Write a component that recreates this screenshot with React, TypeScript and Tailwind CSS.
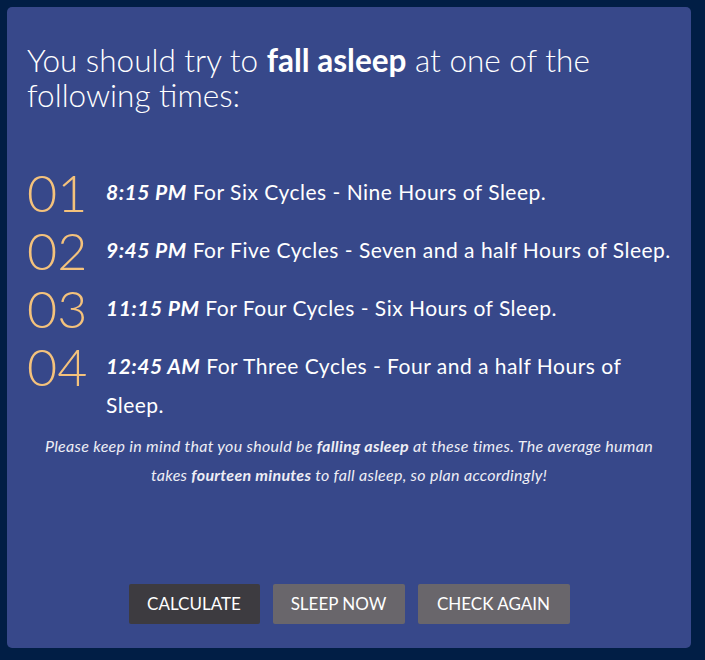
import React from 'react';

const times = [
  { n: '01', time: '8:15 PM', text: 'For Six Cycles - Nine Hours of Sleep.' },
  { n: '02', time: '9:45 PM', text: 'For Five Cycles - Seven and a half Hours of Sleep.' },
  { n: '03', time: '11:15 PM', text: 'For Four Cycles - Six Hours of Sleep.' },
  { n: '04', time: '12:45 AM', text: 'For Three Cycles - Four and a half Hours of Sleep.' },
];

export default function App() {
  return (
    <div
      className="min-h-[660px] w-[705px] bg-[#011e45] p-[7px]"
      style={{ fontFamily: 'Lato, "Open Sans", sans-serif' }}
    >
      <div className="flex h-[641px] w-[684px] flex-col rounded-[5px] bg-[#37488a] px-[20px] pb-[24px] pt-[36px] text-white">
        <h1 className="text-[31.5px] font-light leading-[35px]">
          You should try to <span className="font-bold">fall asleep</span> at one of the following times:
        </h1>

        <ul className="mt-[50px]">
          {times.map((t) => (
            <li key={t.n} className="flex items-start">
              <span className="w-[79px] shrink-0 text-[52px] font-light leading-[58px] text-[#f4c27c]">{t.n}</span>
              <p className="mt-[9px] text-[21px] leading-[39px] tracking-[0.5px]">
                <span className="font-bold italic">{t.time}</span> {t.text}
              </p>
            </li>
          ))}
        </ul>

        <p className="mt-[7px] text-center text-[16px] italic leading-[29px] tracking-[0.3px] text-[#eeeef5]">
          Please keep in mind that you should be <span className="font-bold">falling asleep</span> at these times. The
          average human takes <span className="font-bold">fourteen minutes</span> to fall asleep, so plan accordingly!
        </p>

        <div className="mt-auto flex justify-center gap-[13px]">
          <button className="h-[40px] w-[131px] rounded-[2px] bg-[#3d3b40] text-[17px] uppercase text-white">
            Calculate
          </button>
          <button className="h-[40px] w-[132px] rounded-[2px] bg-[#69666b] text-[17px] uppercase text-white">
            Sleep Now
          </button>
          <button className="h-[40px] w-[152px] rounded-[2px] bg-[#69666b] text-[17px] uppercase text-white">
            Check Again
          </button>
        </div>
      </div>
    </div>
  );
}
